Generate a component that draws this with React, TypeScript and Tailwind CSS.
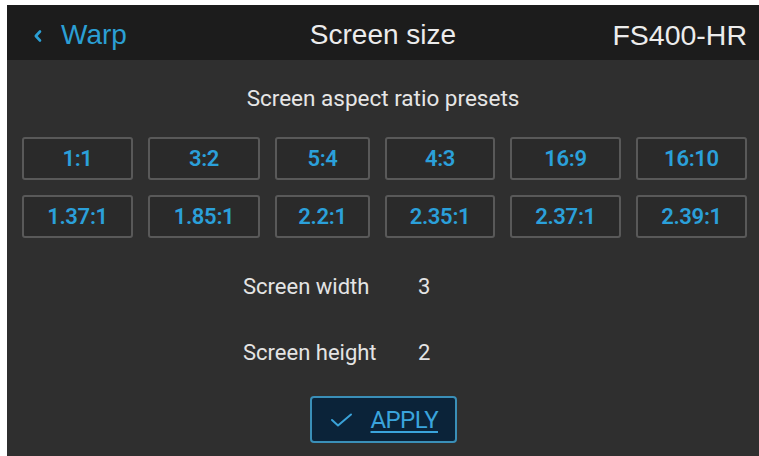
import React from "react";

const presets = [
  ["1:1", "3:2", "5:4", "4:3", "16:9", "16:10"],
  ["1.37:1", "1.85:1", "2.2:1", "2.35:1", "2.37:1", "2.39:1"],
];

export default function App() {
  return (
    <div className="w-[759px] h-[456px] bg-white pt-[5px] pl-[7px] overflow-hidden">
      <div className="flex flex-col w-full h-full" style={{ fontFamily: "Roboto, 'Liberation Sans', sans-serif" }}>
        <div
          className="h-[55px] bg-[#1c1c1c] grid grid-cols-[1fr_auto_1fr] items-center px-[12px] pt-[5px] shrink-0"
          style={{ fontFamily: "'Liberation Sans', Arial, sans-serif" }}
        >
          <div className="flex items-center pl-[14px] text-[#2b9fd4]">
            <svg width="10" height="14" viewBox="0 0 10 14" className="mr-[18px] mt-[1px]">
              <path d="M7 2.5 L2.8 7 L7 11.5" fill="none" stroke="#2b9fd4" strokeWidth="2.6" strokeLinecap="round" strokeLinejoin="round" />
            </svg>
            <span className="text-[28px] leading-none">Warp</span>
          </div>
          <div className="text-[28px] leading-none text-[#ececec] text-center">Screen size</div>
          <div className="text-[28.5px] leading-none text-[#ececec] text-right">FS400-HR</div>
        </div>
        <div className="flex-1 bg-[#2f2f2f] flex flex-col">
          <div className="mt-[25px] text-center text-[22.5px] leading-[26px] text-[#e6e6e6]">
            Screen aspect ratio presets
          </div>
          <div className="mt-[26px] pl-[15px] flex flex-col gap-[15px]">
            {presets.map((row, ri) => (
              <div key={ri} className="grid grid-cols-[111px_112px_95px_110px_111px_111px] gap-x-[15px]">
                {row.map((p) => (
                  <div
                    key={p}
                    className="h-[43px] flex items-center justify-center rounded-[3px] border-2 border-[#595959] bg-[#2a2a2a] text-[#2ba0da] text-[22px] font-semibold tracking-[-0.3px]"
                  >
                    {p}
                  </div>
                ))}
              </div>
            ))}
          </div>
          <div className="pl-[236px] mt-[36px] flex flex-col gap-[40px] text-[#e4e4e4] text-[22px] leading-[26px]">
            <div className="flex">
              <span className="w-[175px]">Screen width</span>
              <span>3</span>
            </div>
            <div className="flex">
              <span className="w-[175px]">Screen height</span>
              <span>2</span>
            </div>
          </div>
          <div className="mt-[30px] flex justify-center">
            <div className="w-[147px] h-[47px] rounded-[4px] border-2 border-[#3a8fb8] bg-[#0b2339] flex items-center pl-[18px] gap-[17px]">
              <svg width="24" height="14" viewBox="0 0 24 14">
                <path d="M2 7 L8 12.5 L21 1.5" fill="none" stroke="#3aa2d8" strokeWidth="2" strokeLinecap="round" strokeLinejoin="round" />
              </svg>
              <span className="text-[#3aa4dc] text-[24px] leading-none underline underline-offset-[3px] decoration-2 tracking-[-0.6px]">
                APPLY
              </span>
            </div>
          </div>
        </div>
      </div>
    </div>
  );
}
